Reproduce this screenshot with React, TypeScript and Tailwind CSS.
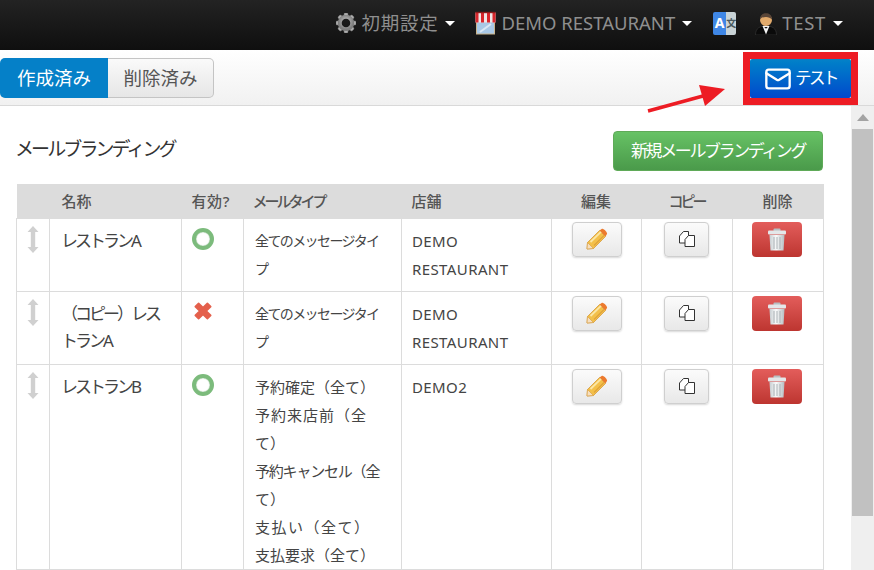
import React from 'react';
import { Mail } from 'lucide-react';

const font = { fontFamily: '"Noto Sans", "Noto Sans CJK JP", sans-serif' };

const Caret = () => <span className="ml-[7px] inline-block border-x-[5px] border-t-[5px] border-x-transparent border-t-white" />;

const GearIcon = () => (
  <svg width="22" height="22" viewBox="0 0 22 22">
    <defs>
      <radialGradient id="gear" cx="50%" cy="40%" r="60%">
        <stop offset="0%" stopColor="#c8c8c8" />
        <stop offset="100%" stopColor="#7d7d7d" />
      </radialGradient>
    </defs>
    <g fill="url(#gear)">
      {[0, 45, 90, 135, 180, 225, 270, 315].map((a) => (
        <rect key={a} x="8.8" y="1" width="4.4" height="5" rx="1" transform={`rotate(${a} 11 11)`} />
      ))}
    </g>
    <circle cx="11" cy="11" r="6.3" fill="none" stroke="url(#gear)" strokeWidth="4" />
  </svg>
);

const ShopIcon = () => (
  <svg width="21" height="24" viewBox="0 0 21 24">
    <rect x="1.5" y="10" width="18" height="13" fill="#a9c8e6" stroke="#c9b48c" />
    <path d="M5 21 L16 13" stroke="#dbe8f5" strokeWidth="2" />
    <rect x="0.5" y="1.5" width="20" height="10" fill="#f0e6e6" />
    <path d="M0.5 1.5 H3.5 V11.5 H0.5 Z M6 1.5 H9 V11.5 H6 Z M12 1.5 H15 V11.5 H12 Z M17.5 1.5 H20.5 V11.5 H17.5 Z" fill="#d9262c" />
    <path d="M0.5 1.5 H20.5" stroke="#8c1c1c" strokeWidth="1.4" />
  </svg>
);

const TranslateIcon = () => (
  <div className="flex h-[23px] w-[23px] overflow-hidden rounded-[2px]">
    <div className="flex w-[14px] items-center justify-center bg-[#3f87e6] text-[14px] font-bold leading-none text-white">A</div>
    <div className="flex flex-1 items-center justify-center bg-[#c9d3d6] text-[10px] font-bold leading-none text-[#4a5a60]">文</div>
  </div>
);

const UserIcon = () => (
  <svg width="22" height="24" viewBox="0 0 22 24">
    <path d="M0.5 24 C0.5 17 5 15 11 15 C17 15 21.5 17 21.5 24 Z" fill="#0a0a0a" stroke="#3a3a3a" strokeWidth="0.6" />
    <path d="M7.5 15 L11 23.5 L14.5 15 Z" fill="#f4f4f4" />
    <path d="M9.2 16 H12.8 L11 17.8 Z" fill="#111" />
    <circle cx="11" cy="9" r="6" fill="#e3ab6c" />
    <path d="M5 8.5 C4.5 0 17.5 0 17 8.5 C14.5 5 7.5 5 5 8.5 Z" fill="#5a4638" />
  </svg>
);

const PencilIcon = () => (
  <svg width="22" height="22" viewBox="0 0 22 22">
    <path d="M1.5 14.5 L13.5 2.5 L19.5 8.5 L7.5 20.5 L1 21 Z" fill="#f3c04a" stroke="#d59a3c" strokeWidth="0.8" />
    <path d="M13.5 2.5 L16 0.8 C17.5 0 21.8 4.5 21 6 L19.5 8.5 Z" fill="#ec7a2e" />
    <path d="M1.5 14.5 L7.5 20.5 L1 21 Z" fill="#f6dfc0" stroke="#d59a3c" strokeWidth="0.6" />
    <path d="M4.5 14 L15 3.8" stroke="#fbe6a6" strokeWidth="1.8" />
    <path d="M8 17.5 L18 7.5" stroke="#e0a23a" strokeWidth="1.2" />
  </svg>
);

const CopyIcon = () => (
  <svg width="18" height="18" viewBox="0 0 18 18" fill="#fff" stroke="#333" strokeWidth="1">
    <path d="M1.5 6 L5.5 1.5 H10.5 V13 H1.5 Z" />
    <path d="M7 9.5 L10.5 5.5 H16.5 V16.5 H7 Z" />
  </svg>
);

const TrashIcon = () => (
  <svg width="20" height="23" viewBox="0 0 20 23">
    <defs>
      <linearGradient id="bin" x1="0" x2="1" y1="0" y2="0">
        <stop offset="0%" stopColor="#c6cdd1" />
        <stop offset="45%" stopColor="#fafbfb" />
        <stop offset="100%" stopColor="#b4bcc0" />
      </linearGradient>
    </defs>
    <rect x="6.5" y="0.5" width="7" height="3" rx="1" fill="#b8bec1" />
    <rect x="1" y="2.5" width="18" height="4" rx="1" fill="#e4e7e9" />
    <path d="M2.5 7 H17.5 L16.5 22.5 H3.5 Z" fill="url(#bin)" />
    <path d="M7 9 V21 M10 9 V21 M13 9 V21" stroke="#aab1b5" strokeWidth="1" />
  </svg>
);

const DragIcon = () => (
  <svg width="12" height="27" viewBox="0 0 12 27" fill="#d0d0d0">
    <path d="M6 0 L11.5 6 H8.2 V21 H11.5 L6 27 L0.5 21 H3.8 V6 H0.5 Z" />
  </svg>
);

const OkIcon = () => (
  <div className="mt-[1px] h-[22px] w-[22px] rounded-full border-[4.5px] border-[#7cbb7c] bg-white shadow-[inset_0_0_1px_#3f8f45]" />
);

const NgIcon = () => (
  <svg width="22" height="22" viewBox="0 0 20 20">
    <path d="M3 6 L6 3 L10 7 L14 3 L17 6 L13 10 L17 14 L14 17 L10 13 L6 17 L3 14 L7 10 Z" fill="#e4604c" stroke="#e4604c" strokeWidth="1.5" strokeLinejoin="round" />
  </svg>
);

const allTypes = [
  { t: '全てのメッセージタイ', c: 'text-[14px] tracking-[-1.6px]' },
  { t: 'プ', c: 'text-[14px]' },
];

const rows = [
  { name: 'レストランA', ok: true, types: allTypes, shop: 'DEMO RESTAURANT' },
  { name: '（コピー）レストランA', ok: false, types: allTypes, shop: 'DEMO RESTAURANT' },
  {
    name: 'レストランB',
    ok: true,
    types: [
      { t: '予約確定（全て）', c: 'text-[15px]' },
      { t: '予約来店前（全', c: 'text-[15px] tracking-[1px]' },
      { t: 'て）', c: 'text-[15px]' },
      { t: '予約キャンセル（全', c: 'text-[15px] tracking-[-1.2px]' },
      { t: 'て）', c: 'text-[15px]' },
      { t: '支払い（全て）', c: 'text-[15px] tracking-[1.5px]' },
      { t: '支払要求（全て）', c: 'text-[15px]' },
    ],
    shop: 'DEMO2',
  },
];

const headers = [
  { label: '', c: '' },
  { label: '名称', c: 'text-left pl-[12px]' },
  { label: '有効?', c: 'text-left pl-[10px] tracking-[0.6px]' },
  { label: 'メールタイプ', c: 'text-left pl-[9px] tracking-[-3px]' },
  { label: '店舗', c: 'text-left pl-[10px]' },
  { label: '編集', c: 'text-center pr-[1px]' },
  { label: 'コピー', c: 'text-center tracking-[-3px] pr-[1px]' },
  { label: '削除', c: 'text-center pr-[1px]' },
];

const App: React.FC = () => {
  return (
    <div className="relative h-[570px] w-[874px] overflow-hidden bg-white" style={font}>
      {/* Navbar */}
      <div className="flex h-[50px] items-center justify-end bg-gradient-to-b from-[#232323] to-[#0f0f0f] pr-[31px] pb-[4px] text-[18.5px] text-[#8f8f8f]">
        <GearIcon />
        <span className="ml-[5px] tracking-[0.7px]">初期設定</span>
        <Caret />
        <div className="ml-[20px]"><ShopIcon /></div>
        <span className="ml-[5px]">DEMO RESTAURANT</span>
        <Caret />
        <div className="ml-[21px]"><TranslateIcon /></div>
        <div className="ml-[19px]"><UserIcon /></div>
        <span className="ml-[5px] tracking-[0.7px]">TEST</span>
        <Caret />
      </div>

      {/* Toolbar */}
      <div className="flex h-[56px] items-start justify-between border-b border-[#d9d9d9] bg-gradient-to-b from-white to-[#f1f1f1] pt-[8px] pr-[23px]">
        <div className="flex h-[40px] text-[18.5px]">
          <button className="w-[108px] rounded-l-[5px] bg-[#0580c8] text-white">作成済み</button>
          <button className="w-[106px] rounded-r-[5px] border border-l-0 border-[#c4c4c4] bg-gradient-to-b from-[#fafafa] to-[#e6e6e6] text-[#555]">削除済み</button>
        </div>
        <button className="mt-[1px] flex h-[39px] w-[101px] items-center justify-center gap-[3px] rounded-[2px] bg-gradient-to-b from-[#0582c8] to-[#0447cc] text-[16.5px] text-white">
          <Mail size={28} strokeWidth={2} />
          <span className="tracking-[-2.5px]">テスト</span>
        </button>
      </div>

      {/* Body */}
      <div className="flex h-[464px]">
        <div className="w-[851px] overflow-hidden pl-[15px] pr-[28px]">
          <div className="flex h-[78px] items-start justify-between pt-[25px]">
            <h2 className="pt-[2px] text-[19px] leading-[32px] tracking-[-2.9px] text-[#333]">メールブランディング</h2>
            <button className="h-[40px] w-[210px] rounded-[4px] border border-[#5faa58] bg-gradient-to-b from-[#67c265] to-[#4a9a4a] text-[17px] tracking-[-2.4px] text-white">
              新規メールブランディング
            </button>
          </div>

          <table className="ml-[1px] w-[807px] table-fixed border-collapse text-[#444]">
            <colgroup>
              <col className="w-[33px]" />
              <col className="w-[132px]" />
              <col className="w-[62px]" />
              <col className="w-[158px]" />
              <col className="w-[150px]" />
              <col className="w-[90px]" />
              <col className="w-[91px]" />
              <col className="w-[91px]" />
            </colgroup>
            <thead>
              <tr className="h-[34px] bg-[#dcdcdc] text-[15px] text-[#555]">
                {headers.map((h, i) => (
                  <th key={i} className={`${h.c} font-medium`}>{h.label}</th>
                ))}
              </tr>
            </thead>
            <tbody>
              {rows.map((r, i) => {
                const btnCell = i === 0 ? 'pt-[3px] pb-[34px]' : 'pt-[4px] pb-[33px]';
                return (
                  <tr key={r.name} className="align-top">
                    <td className="border border-[#dcdcdc] pt-[7px] pl-[10px]"><DragIcon /></td>
                    <td className="border border-[#dcdcdc] pr-[14px] pl-[11px] pt-[8px] text-[17px] leading-[27px] tracking-[-3px] text-[#444]">{r.name}</td>
                    <td className="border border-[#dcdcdc] pt-[8px] pl-[10px]">{r.ok ? <OkIcon /> : <NgIcon />}</td>
                    <td className="border border-[#dcdcdc] pl-[11px] pt-[8px] leading-[28px]">
                      {r.types.map((l, j) => <div key={j} className={`whitespace-nowrap ${l.c}`}>{l.t}</div>)}
                    </td>
                    <td className="border border-[#dcdcdc] px-[10px] pt-[8px] text-[15px] leading-[28px] tracking-[0.4px]">{r.shop}</td>
                    <td className={`border border-[#dcdcdc] ${btnCell} text-center`}>
                      <button className="inline-flex h-[35px] w-[50px] items-center justify-center rounded-[4px] border border-[#cfcfcf] bg-gradient-to-b from-[#fbfbfb] to-[#e8e8e8] shadow-[0_1px_2px_#d8d8d8]"><PencilIcon /></button>
                    </td>
                    <td className={`border border-[#dcdcdc] ${btnCell} pr-[1px] text-center`}>
                      <button className="inline-flex h-[35px] w-[45px] items-center justify-center rounded-[4px] border border-[#cfcfcf] bg-gradient-to-b from-[#fbfbfb] to-[#e8e8e8] shadow-[0_1px_2px_#d8d8d8]"><CopyIcon /></button>
                    </td>
                    <td className={`border border-[#dcdcdc] ${btnCell} pr-[2px] text-center`}>
                      <button className="inline-flex h-[35px] w-[50px] items-center justify-center rounded-[4px] bg-gradient-to-b from-[#e35d5b] to-[#bd3530]"><TrashIcon /></button>
                    </td>
                  </tr>
                );
              })}
            </tbody>
          </table>
        </div>

        {/* Scrollbar */}
        <div className="flex h-[464px] w-[23px] flex-col bg-[#efefef]">
          <div className="flex h-[23px] items-center justify-center">
            <span className="border-x-[6px] border-b-[7px] border-x-transparent border-b-[#a3a3a3]" />
          </div>
          <div className="ml-[1px] h-[387px] w-[21px] bg-[#c1c1c1]" />
        </div>
      </div>

      {/* Annotation */}
      <div className="absolute left-[743px] top-[52px] h-[53px] w-[115px] border-[7px] border-[#ed1c24]" />
      <svg className="absolute left-[645px] top-[82px]" width="85" height="34" viewBox="0 0 85 34">
        <path d="M3 29 L58 14" stroke="#ed1c24" strokeWidth="3.5" />
        <path d="M80 7 L54 3 L60 24 Z" fill="#ed1c24" />
      </svg>
    </div>
  );
};

export default App;
